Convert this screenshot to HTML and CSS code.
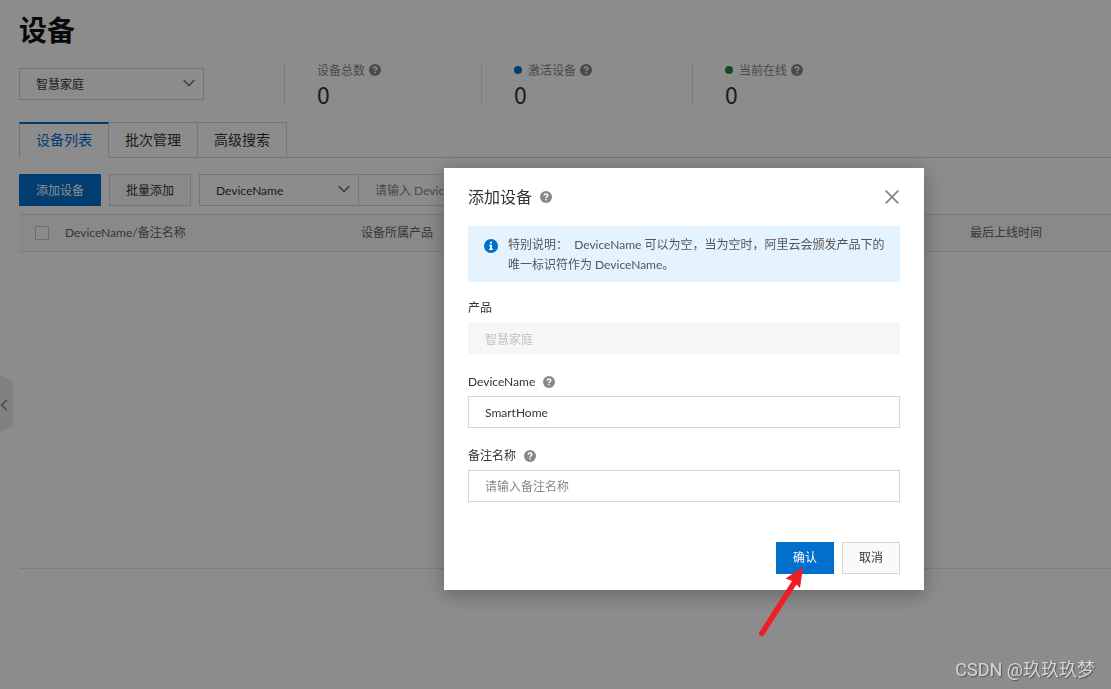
FILE: index.html
```html
<!DOCTYPE html>
<html lang="zh-CN">
<head>
<meta charset="utf-8">
<title>设备</title>
<link rel="stylesheet" href="styles.css">
</head>
<body>
<svg class="sprite" aria-hidden="true">
  <symbol id="help" viewBox="0 0 12 12"><circle cx="6" cy="6" r="6" fill="currentColor"/><path d="M4.2 4.7C4.2 2.5 7.8 2.5 7.8 4.6C7.8 5.8 6 5.8 6 7.2" fill="none" stroke="var(--mark)" stroke-width="1.4"/><rect x="5.3" y="8" width="1.4" height="1.4" fill="var(--mark)"/></symbol>
  <symbol id="chevron" viewBox="0 0 12 8"><path d="M.7 1L6 6.5L11.3 1" fill="none" stroke="currentColor" stroke-width="1.6"/></symbol>
</svg>
<main class="page">
  <h1 class="title">设备</h1>
  <div class="summary">
    <div class="select product-select">
      <select aria-label="产品"><option>智慧家庭</option></select>
      <svg class="chevron"><use href="#chevron"/></svg>
    </div>
    <div class="stats">
      <div class="stat"><div class="stat-label"><span>设备总数</span><svg class="help"><use href="#help"/></svg></div><div class="stat-value">0</div></div>
      <div class="stat"><div class="stat-label"><i class="dot dot-blue"></i><span>激活设备</span><svg class="help"><use href="#help"/></svg></div><div class="stat-value">0</div></div>
      <div class="stat"><div class="stat-label"><i class="dot dot-green"></i><span>当前在线</span><svg class="help"><use href="#help"/></svg></div><div class="stat-value">0</div></div>
    </div>
  </div>
  <nav class="tabs">
    <button class="tab active">设备列表</button>
    <button class="tab">批次管理</button>
    <button class="tab">高级搜索</button>
  </nav>
  <div class="toolbar">
    <button class="btn primary">添加设备</button>
    <button class="btn">批量添加</button>
    <div class="search">
      <div class="select search-select">
        <select aria-label="搜索条件"><option>DeviceName</option></select>
        <svg class="chevron"><use href="#chevron"/></svg>
      </div>
      <input class="input search-input" aria-label="搜索" placeholder="请输入 DeviceName">
    </div>
  </div>
  <table class="devices">
    <thead>
      <tr>
        <th class="col-check"><input type="checkbox" class="check" aria-label="全选"></th>
        <th class="col-name">DeviceName/备注名称</th>
        <th class="col-product">设备所属产品</th>
        <th>最后上线时间</th>
      </tr>
    </thead>
    <tbody><tr><td colspan="4" class="empty"></td></tr></tbody>
  </table>
  <button class="handle" aria-label="展开侧栏"><svg viewBox="0 0 8 12"><path d="M7 .7L1.5 6L7 11.3" fill="none" stroke="currentColor" stroke-width="1.5"/></svg></button>
</main>

<div class="overlay">
  <section class="dialog" role="dialog" aria-labelledby="dialog-title">
    <header class="dialog-head">
      <h2 id="dialog-title">添加设备</h2>
      <svg class="help"><use href="#help"/></svg>
      <button class="close" aria-label="关闭"><svg viewBox="0 0 14 14"><path d="M.7.7L13.3 13.3M13.3.7L.7 13.3" stroke="currentColor" stroke-width="1.9"/></svg></button>
    </header>
    <div class="notice">
      <svg class="info" viewBox="0 0 14 14"><circle cx="7" cy="7" r="7" fill="#0070cc"/><path d="M6 2.7h2v1.8H6zM5.2 5.7H8v4h1v1.2H5V9.700h1V6.900h-.8z" fill="#fff"/></svg>
      <p>特别说明：&nbsp; DeviceName 可以为空，当为空时，阿里云会颁发产品下的唯一标识符作为 DeviceName。</p>
    </div>
    <form class="form">
      <div class="field">
        <label for="product">产品</label>
        <input class="input" id="product" value="智慧家庭" disabled>
      </div>
      <div class="field">
        <label for="device-name">DeviceName<svg class="help"><use href="#help"/></svg></label>
        <input class="input" id="device-name" value="SmartHome">
      </div>
      <div class="field">
        <label for="remark">备注名称<svg class="help"><use href="#help"/></svg></label>
        <input class="input" id="remark" placeholder="请输入备注名称">
      </div>
      <footer class="actions">
        <button type="button" class="btn primary">确认</button>
        <button type="button" class="btn">取消</button>
      </footer>
    </form>
    <svg class="arrow" viewBox="0 0 50 73"><path d="M44 0L41 21L37.500 17.500L5 68A2.500 2.500 0 0 1 .5 65L33 14L26.500 11.500Z" fill="#f01d25"/></svg>
  </section>
</div>
<div class="watermark">CSDN @玖玖玖梦</div>
</body>
</html>
```
FILE: styles.css
```css
* {
  box-sizing: border-box;
}

body {
  --mark: #fff;
  margin: 0;
  min-height: 100vh;
  overflow: hidden;
  background: #fff;
  color: #333;
  font: 12px/20px Lato, "Noto Sans CJK SC", sans-serif;
}

button,
input,
select {
  font: inherit;
  color: inherit;
  margin: 0;
  border-radius: 0;
}

h1,
h2,
p {
  margin: 0;
}

.sprite {
  position: absolute;
  width: 0;
  height: 0;
}

.page {
  padding: 10px 0 0 19px;
}

.title {
  font-size: 28px;
  line-height: 40px;
  font-weight: 700;
  color: #111;
}

.summary {
  display: flex;
  align-items: flex-start;
  gap: 80px;
  padding-top: 12px;
}

.select {
  position: relative;
}

.product-select {
  width: 185px;
  margin-top: 6px;
}

.select select {
  appearance: none;
  display: block;
  width: 100%;
  height: 32px;
  padding: 2px 32px 0 16px;
  border: 1px solid #d6d6d6;
  background: #fff;
}

.chevron {
  position: absolute;
  right: 9px;
  top: 11px;
  width: 12px;
  height: 8px;
  color: #777;
  pointer-events: none;
}

.stats {
  display: flex;
  padding-top: 1px;
}

.stat {
  height: 43px;
  padding: 0 100px 0 32px;
  border-left: 1px solid #e3e3e3;
}

.stat-label {
  display: flex;
  align-items: center;
  height: 14px;
  color: #888;
}

.stat-label span {
  padding-top: 2px;
}

.stat-value {
  font: 23px/34px "Noto Sans CJK SC", sans-serif;
}

.help {
  flex: none;
  width: 12px;
  height: 12px;
  margin-left: 4px;
  color: #888;
}

.dot {
  width: 8px;
  height: 8px;
  margin-right: 6px;
  border-radius: 50%;
}

.dot-blue {
  background: #0070cc;
}

.dot-green {
  background: #1e8e3e;
}

.tabs {
  display: flex;
  margin-top: 16px;
  border-bottom: 1px solid #d6d6d6;
}

.tab {
  height: 36px;
  margin-bottom: -1px;
  padding: 0 16px;
  border: 1px solid #d6d6d6;
  border-left: 0;
  background: #fff;
  font-size: 14px;
}

.tab.active {
  padding-bottom: 2px;
  border-left: 1px solid #d6d6d6;
  border-top: 2px solid #0070cc;
  border-bottom-color: #fff;
  color: #0070cc;
}

.toolbar {
  display: flex;
  gap: 8px;
  padding: 16px 0 8px;
}

.btn {
  height: 32px;
  padding: 2px 16px 0;
  border: 1px solid #d6d6d6;
  background: #fafafa;
}

.btn.primary {
  border-color: #0070cc;
  background: #0070cc;
  color: #fff;
}

.search {
  display: flex;
}

.search-select {
  width: 160px;
}

.input {
  width: 100%;
  height: 32px;
  padding: 0 16px;
  border: 1px solid #d6d6d6;
  background: #fff;
}

.input::placeholder {
  color: #888;
  opacity: 1;
}

.input:disabled {
  border-color: #f6f6f6;
  background: #f6f6f6;
  color: #c1c1c1;
}

.search-input {
  width: 240px;
  border-left: 0;
}

.devices {
  width: 100%;
  table-layout: fixed;
  border-collapse: collapse;
}

.devices th {
  height: 37px;
  padding: 0;
  border: solid #e3e3e3;
  border-width: 1px 0;
  background: #f9f9f9;
  color: #666;
  font-weight: 400;
  text-align: left;
}

.devices .col-check {
  width: 46px;
  padding-left: 16px;
}

.col-name {
  width: 296px;
}

.col-product {
  width: 609px;
}

.check {
  appearance: none;
  display: block;
  width: 14px;
  height: 14px;
  border: 1px solid #c9c9c9;
  background: #fff;
}

.empty {
  height: 317px;
  padding: 0;
  border-bottom: 1px solid #e3e3e3;
}

.handle {
  position: absolute;
  left: 0;
  top: 375px;
  width: 13px;
  height: 57px;
  padding: 2px 0 0;
  border: 0;
  background: #ebebeb;
  color: #888;
  clip-path: polygon(0 0, 100% 6px, 100% 51px, 0 100%);
}

.handle svg {
  display: block;
  width: 8px;
  height: 12px;
}

.overlay {
  position: fixed;
  inset: 0;
  display: flex;
  justify-content: flex-end;
  align-items: flex-start;
  padding: 168px 187px 0 0;
  background: rgba(0, 0, 0, 0.45);
}

.dialog {
  position: relative;
  width: 480px;
  padding: 16px 24px;
  background: #fff;
  box-shadow: 0 4px 20px rgba(0, 0, 0, 0.3);
}

.dialog-head {
  display: flex;
  align-items: center;
  height: 26px;
}

.dialog-head h2 {
  font-size: 16px;
  font-weight: 400;
}

.dialog-head .help,
.field .help {
  margin-left: 8px;
}

.close {
  width: 16px;
  height: 16px;
  margin-left: auto;
  padding: 1px;
  border: 0;
  background: none;
  color: #888;
}

.close svg {
  display: block;
}

.notice {
  display: flex;
  gap: 10px;
  margin: 16px 0 14px;
  padding: 9px 12px 7px 16px;
  background: #e4f3fe;
  color: #555;
}

.info {
  flex: none;
  width: 14px;
  height: 14px;
  margin-top: 4px;
}

.form {
  display: flex;
  flex-direction: column;
  gap: 16px;
}

.field label {
  display: flex;
  align-items: center;
  height: 26px;
  padding-bottom: 2px;
}

.field .input {
  display: block;
}

.actions {
  display: flex;
  justify-content: flex-end;
  gap: 8px;
  padding-top: 24px;
}

.actions .btn {
  padding-top: 0;
}

.arrow {
  position: absolute;
  right: 115px;
  bottom: -50px;
  width: 50px;
  height: 73px;
}

.watermark {
  position: fixed;
  right: 16px;
  bottom: 7px;
  color: #d6d6d6;
  font: 18px/24px Roboto, "Noto Sans CJK SC", sans-serif;
  text-shadow: 1px 1px 1px #555;
}
```
